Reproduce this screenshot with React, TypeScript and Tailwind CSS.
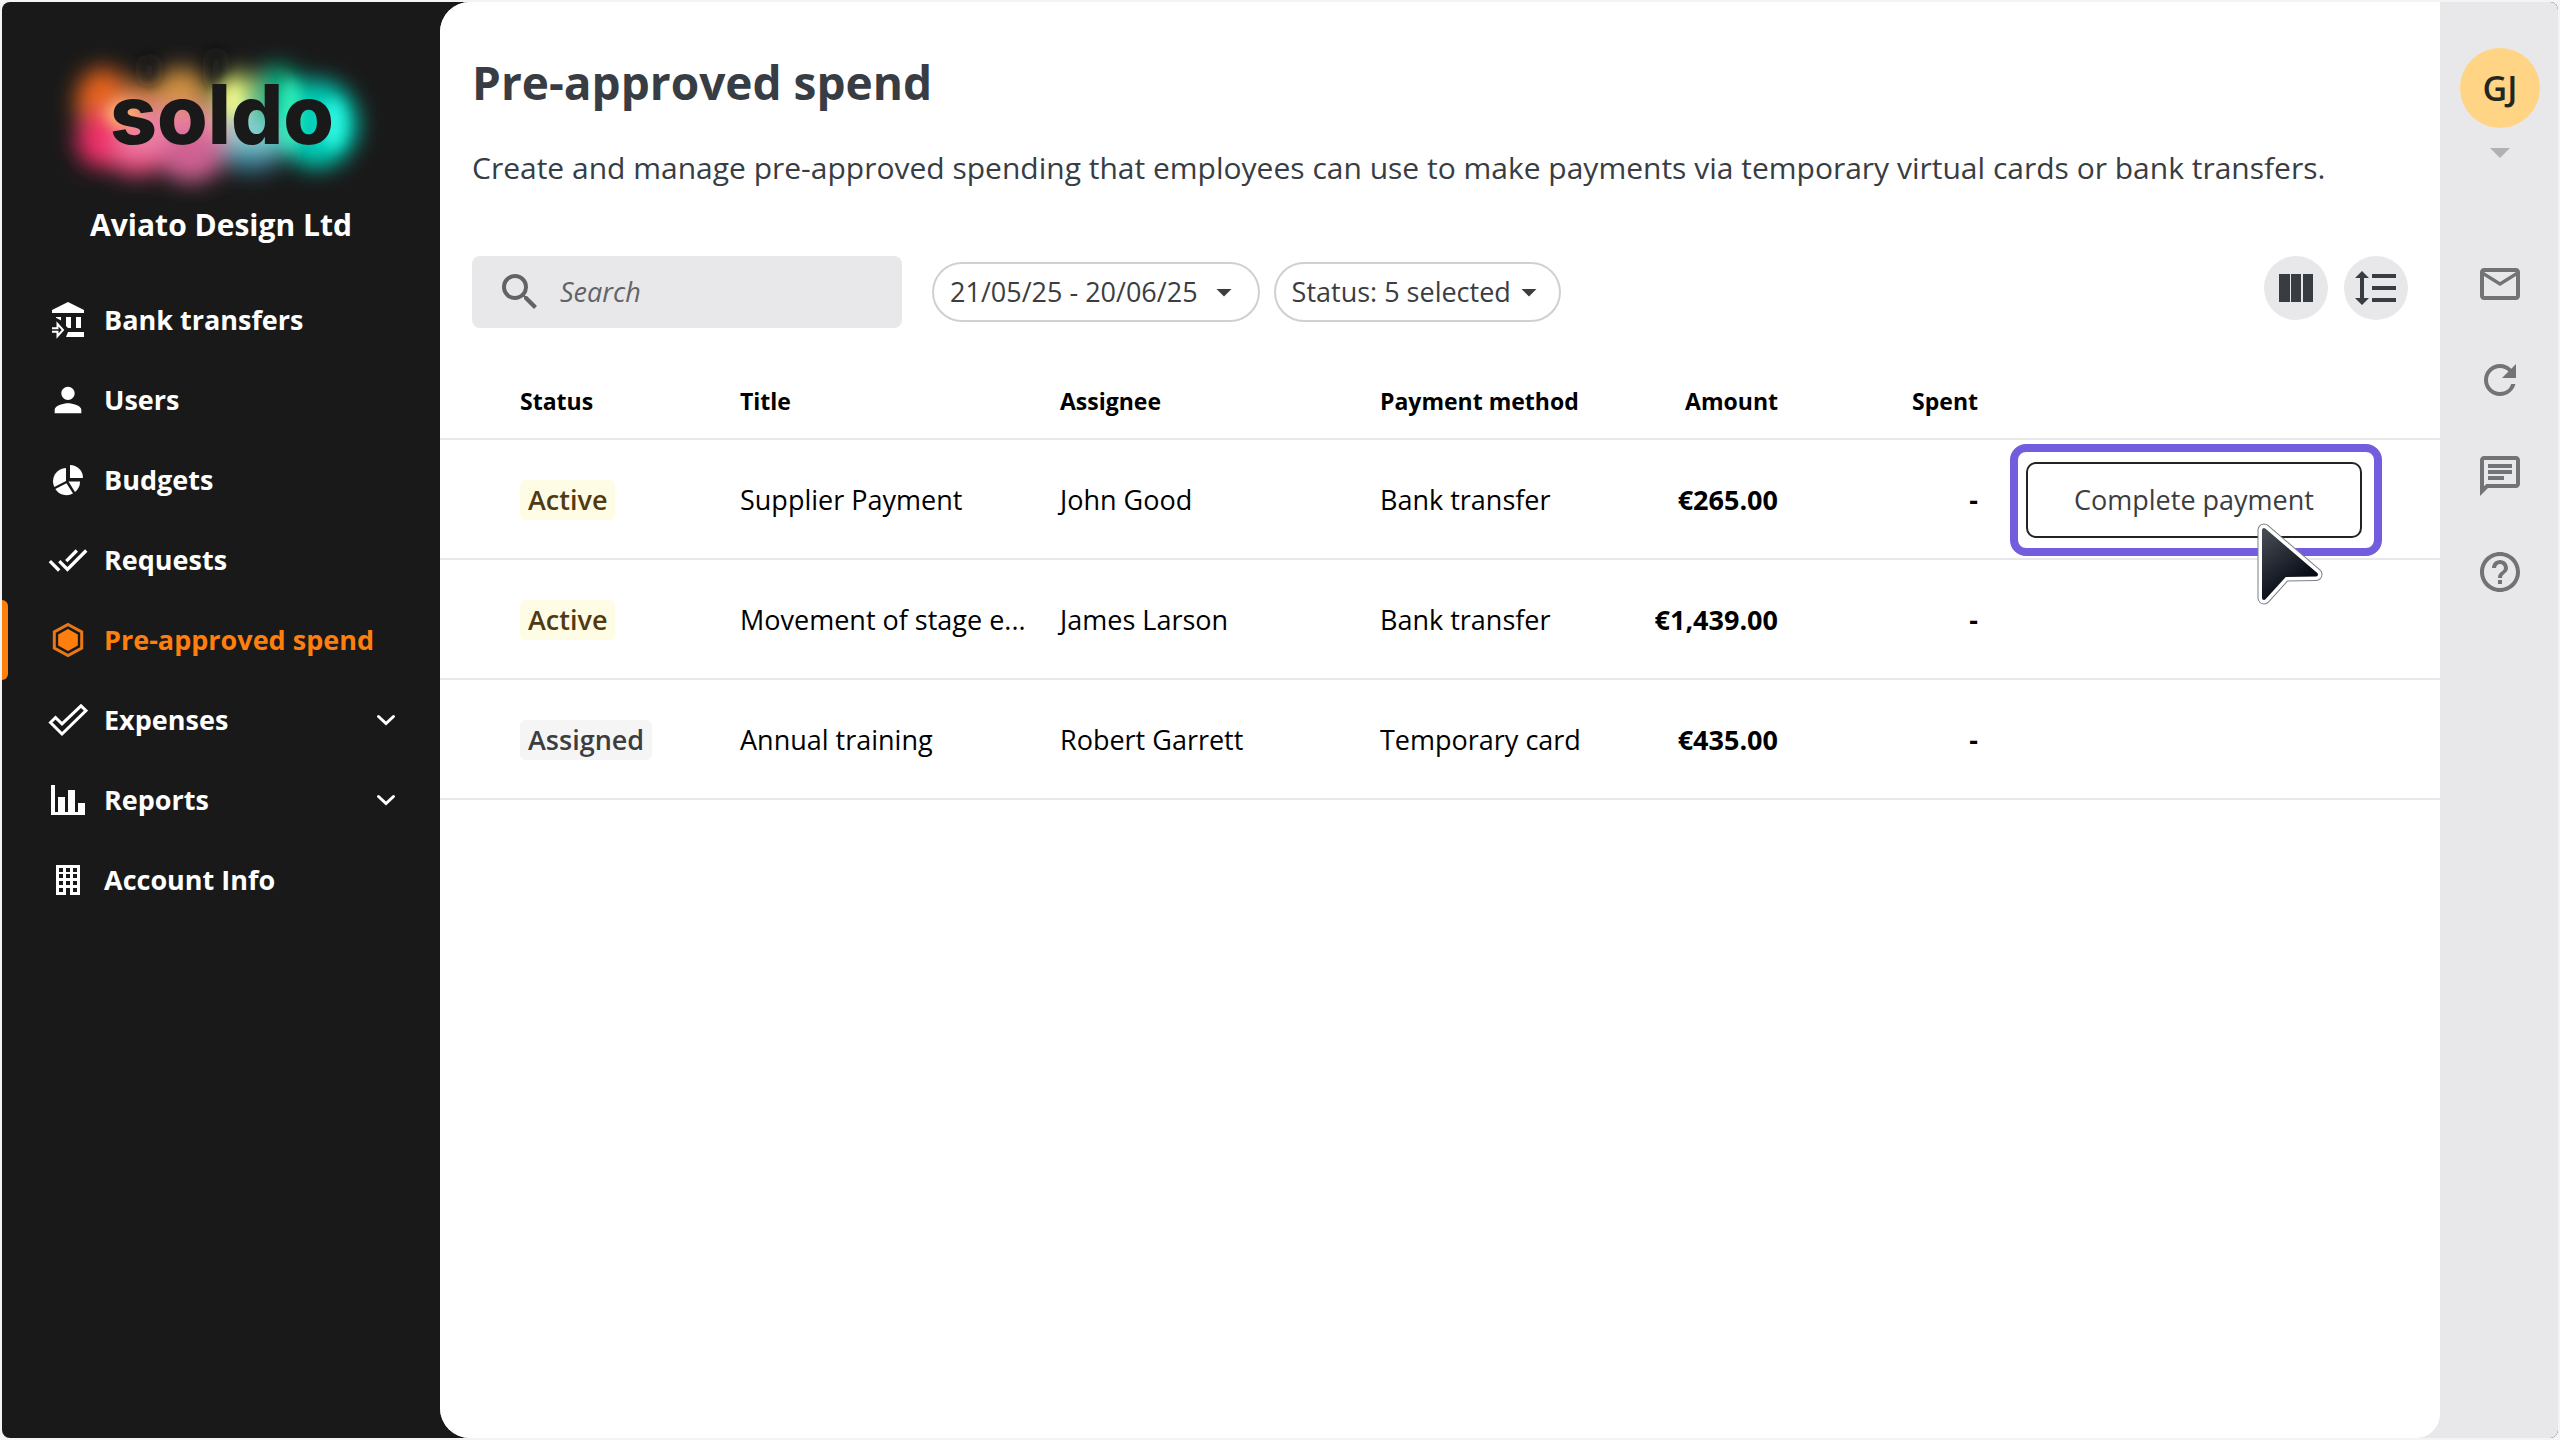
import type { ReactNode } from "react";
import clsx from "clsx";
import {
  MdArrowDropDown,
  MdDoneAll,
  MdFormatLineSpacing,
  MdHelpOutline,
  MdMailOutline,
  MdOutlineChat,
  MdPerson,
  MdRefresh,
  MdSearch,
} from "react-icons/md";

type NavItem = {
  label: string;
  icon: ReactNode;
  active?: boolean;
  expandable?: boolean;
};

type Spend = {
  status: "Active" | "Assigned";
  title: string;
  assignee: string;
  method: string;
  amount: string;
  spent: string;
  action?: string;
};

const BankIcon = () => (
  <svg width="40" height="40" viewBox="0 0 40 40" fill="currentColor">
    <path d="M20 2 36 10v3H4v-3z" />
    <path d="M8 17h5v3.500L8 17.800zM18 17h5v11h-3l-2-2zM28 17h5v11h-5zM20 32h16v5H18z" />
    <path d="M4 28.200h5.500v-4.400l5.500 6.200-5.500 6.200v-4.400H4" fill="none" stroke="currentColor" strokeWidth="2" />
  </svg>
);

const PieIcon = () => (
  <svg width="40" height="40" viewBox="0 0 40 40" fill="currentColor">
    <path d="M22 5a13 13 0 0 1 13 13H22z" />
    <path d="M18 8v13L6.300 27A13.300 13.300 0 0 1 18 8z" />
    <path d="M7.300 29 18.500 23.200 25 33.400A13.300 13.300 0 0 1 7.300 29z" />
    <path d="M20.500 21.500H32A13.300 13.300 0 0 1 27 32z" />
  </svg>
);

const HexagonIcon = () => (
  <svg width="40" height="40" viewBox="0 0 40 40">
    <path d="M20 4.500 33.700 12v16L20 35.500 6.300 28V12z" fill="none" stroke="#e8771a" strokeWidth="3" />
    <path d="M20 9 29.800 14.500v11L20 31l-9.800-5.500v-11z" fill="#ff7f0e" />
  </svg>
);

const CheckOutlineIcon = () => (
  <svg width="40" height="40" viewBox="0 0 40 40" fill="none" stroke="currentColor" strokeWidth="3">
    <path d="m2.500 22.500 5-5 6.500 6.300L33 5.800l5 4.800L14 34z" />
  </svg>
);

const ChartIcon = () => (
  <svg width="40" height="40" viewBox="0 0 40 40" fill="currentColor">
    <path d="M3 5h4v27h3V17h7v15h3V10h7v22h3v-9h7v12H3z" />
  </svg>
);

const BuildingIcon = () => (
  <svg width="40" height="40" viewBox="0 0 40 40">
    <path d="M8 5h24v30H22v-5h-4v5H8z" fill="currentColor" />
    {[8, 14, 21, 28].map((y) =>
      [11, 18, 25].map((x) => <rect key={`${x}-${y}`} x={x} y={y} width="4" height="4" fill="#191919" />)
    )}
  </svg>
);

const ColumnsIcon = () => (
  <svg width="48" height="48" viewBox="0 0 48 48" fill="currentColor">
    <path d="M7 10h11v28H7zM19 10h10v28H19zM31 10h10v28H31z" />
  </svg>
);

const Chevron = () => (
  <svg width="20" height="12" viewBox="0 0 20 12" fill="none" stroke="currentColor" strokeWidth="3" strokeLinecap="round">
    <path d="m2.500 2.500 7.500 7 7.500-7" />
  </svg>
);

const Pointer = () => (
  <svg className="absolute top-[69px] left-[236px]" width="72" height="86" viewBox="0 0 72 86">
    <defs>
      <linearGradient id="pointer" x1="0" y1="0" x2="0.5" y2="0.9">
        <stop offset="0" stopColor="#474c55" />
        <stop offset="1" stopColor="#060a14" />
      </linearGradient>
    </defs>
    <g strokeLinejoin="round">
      <path d="M10 9v68l21-23 31-.5z" fill="#7d7f85" stroke="#7d7f85" strokeWidth="13" />
      <path d="M10 9v68l21-23 31-.5z" fill="#fff" stroke="#fff" strokeWidth="11" />
      <path d="M10 9v68l21-23 31-.5z" fill="url(#pointer)" stroke="url(#pointer)" strokeWidth="4" />
    </g>
  </svg>
);

const Logo = () => (
  <svg width="360" height="160" viewBox="0 0 360 160" role="img" aria-label="soldo">
    <defs>
      <filter id="glow" x="-20%" y="-40%" width="140%" height="180%">
        <feGaussianBlur stdDeviation="11" />
      </filter>
      <filter id="soft" x="-40%" y="-40%" width="180%" height="180%">
        <feGaussianBlur stdDeviation="7" />
      </filter>
    </defs>
    <g filter="url(#glow)">
      <ellipse cx="62" cy="60" rx="27" ry="34" fill="#e8641c" />
      <ellipse cx="100" cy="64" rx="26" ry="26" fill="#c97a3e" />
      <ellipse cx="62" cy="98" rx="27" ry="28" fill="#ee2f66" />
      <ellipse cx="96" cy="108" rx="30" ry="26" fill="#ea4a7e" />
      <ellipse cx="140" cy="54" rx="27" ry="28" fill="#d2933f" />
      <rect x="80" y="68" width="120" height="44" fill="#ee7fa6" />
      <ellipse cx="150" cy="114" rx="32" ry="26" fill="#cf6093" />
      <ellipse cx="194" cy="58" rx="22" ry="28" fill="#cfe26a" />
      <ellipse cx="210" cy="110" rx="32" ry="20" fill="#3b7f96" />
      <rect x="188" y="64" width="56" height="42" fill="#86d2d6" />
      <ellipse cx="236" cy="54" rx="28" ry="30" fill="#0fae7d" />
      <ellipse cx="276" cy="82" rx="41" ry="44" fill="#06cdb6" />
    </g>
    <g filter="url(#soft)">
      <ellipse cx="82" cy="72" rx="18" ry="14" fill="#ffab6b" />
      <ellipse cx="192" cy="60" rx="9" ry="16" fill="#f3f98e" />
      <ellipse cx="250" cy="72" rx="9" ry="34" fill="#39f2b8" />
      <ellipse cx="292" cy="82" rx="12" ry="24" fill="#2ff5e0" />
      <ellipse cx="108" cy="28" rx="9" ry="16" fill="#191919" fillOpacity="0.7" />
      <ellipse cx="175" cy="26" rx="9" ry="20" fill="#191919" fillOpacity="0.8" />
    </g>
    <text x="181" y="102" textAnchor="middle" fontFamily="Inter, sans-serif" fontWeight="800" fontSize="82" fill="#191919">
      soldo
    </text>
  </svg>
);

const navItems: NavItem[] = [
  { label: "Bank transfers", icon: <BankIcon /> },
  { label: "Users", icon: <MdPerson size={40} /> },
  { label: "Budgets", icon: <PieIcon /> },
  { label: "Requests", icon: <MdDoneAll size={40} /> },
  { label: "Pre-approved spend", icon: <HexagonIcon />, active: true },
  { label: "Expenses", icon: <CheckOutlineIcon />, expandable: true },
  { label: "Reports", icon: <ChartIcon />, expandable: true },
  { label: "Account Info", icon: <BuildingIcon /> },
];

const spends: Spend[] = [
  {
    status: "Active",
    title: "Supplier Payment",
    assignee: "John Good",
    method: "Bank transfer",
    amount: "€265.00",
    spent: "-",
    action: "Complete payment",
  },
  {
    status: "Active",
    title: "Movement of stage e...",
    assignee: "James Larson",
    method: "Bank transfer",
    amount: "€1,439.00",
    spent: "-",
  },
  {
    status: "Assigned",
    title: "Annual training",
    assignee: "Robert Garrett",
    method: "Temporary card",
    amount: "€435.00",
    spent: "-",
  },
];

const tools = [
  { label: "Messages", Icon: MdMailOutline },
  { label: "Refresh", Icon: MdRefresh },
  { label: "Chat", Icon: MdOutlineChat },
  { label: "Help", Icon: MdHelpOutline },
];

function Sidebar() {
  return (
    <aside className="flex w-[438px] shrink-0 flex-col text-white">
      <div className="flex flex-col items-center pt-10">
        <Logo />
        <p className="text-[30px] leading-[46px] font-bold">Aviato Design Ltd</p>
      </div>
      <nav className="mt-8">
        {navItems.map(({ label, icon, active, expandable }) => (
          <a
            key={label}
            href="#"
            className={clsx(
              "relative flex h-20 items-center gap-4 pr-[44px] pl-[46px] text-[27px] font-bold",
              active && "text-[#ff7f0e]"
            )}
          >
            {active && <span className="absolute inset-y-0 left-0 w-1.5 rounded-r-md bg-[#ff7f0e]" />}
            {icon}
            <span className="flex-1">{label}</span>
            {expandable && <Chevron />}
          </a>
        ))}
      </nav>
    </aside>
  );
}

function Toolbar() {
  return (
    <div className="flex items-center px-8">
      <label className="flex h-18 w-[430px] items-center gap-4 rounded-lg bg-[#e8e8ea] px-6 text-[#626366]">
        <MdSearch size={48} className="shrink-0" />
        <input
          type="search"
          aria-label="Search"
          placeholder="Search"
          className="w-full min-w-0 bg-transparent text-[27px] italic outline-none placeholder:text-[#626366]"
        />
      </label>
      <div className="ml-[30px] flex gap-3.5 text-[27px] text-[#3c3d40]">
        <button className="flex h-15 items-center gap-2 rounded-full border-2 border-[#d0d0d2] pr-4 pl-4">
          21/05/25 - 20/06/25
          <MdArrowDropDown size={36} />
        </button>
        <button className="flex h-15 items-center rounded-full border-2 border-[#d0d0d2] pr-3 pl-4">
          Status: 5 selected
          <MdArrowDropDown size={36} />
        </button>
      </div>
      <div className="ml-auto flex gap-4 self-start text-[#383d44]">
        <button aria-label="Columns" className="flex size-16 items-center justify-center rounded-full bg-[#e8e8ea]">
          <ColumnsIcon />
        </button>
        <button aria-label="Row height" className="flex size-16 items-center justify-center rounded-full bg-[#e8e8ea]">
          <MdFormatLineSpacing size={48} />
        </button>
      </div>
    </div>
  );
}

function SpendTable() {
  return (
    <table className="mt-[36px] w-full table-fixed text-left text-[27px] text-black">
      <colgroup>
        <col className="w-[300px]" />
        <col className="w-[320px]" />
        <col className="w-[320px]" />
        <col className="w-[220px]" />
        <col className="w-[178px]" />
        <col className="w-[200px]" />
        <col />
      </colgroup>
      <thead>
        <tr className="h-[75px] border-b-2 border-[#e8e8ea] text-[23px] whitespace-nowrap">
          <th className="pl-20">Status</th>
          <th>Title</th>
          <th>Assignee</th>
          <th>Payment method</th>
          <th className="text-right">Amount</th>
          <th className="text-right">Spent</th>
          <td />
        </tr>
      </thead>
      <tbody>
        {spends.map((row) => (
          <tr key={row.title} className="h-[120px] border-b-2 border-[#e8e8ea] *:pt-0.5">
            <td className="pl-20">
              <span
                className={clsx(
                  "inline-flex h-10 items-center rounded-md px-2 font-semibold",
                  row.status === "Active" ? "bg-[#fffce6] text-[#4f3a12]" : "bg-[#f5f5f6] text-[#3c3d40]"
                )}
              >
                {row.status}
              </span>
            </td>
            <td className="truncate">{row.title}</td>
            <td>{row.assignee}</td>
            <td>{row.method}</td>
            <td className="text-right font-bold">{row.amount}</td>
            <td className="text-right font-bold">{row.spent}</td>
            <td className="pl-8">
              {row.action && (
                <div className="relative w-[372px] rounded-2xl border-8 border-[#735cdd] py-2.5 pr-3 pl-2">
                  <button className="h-19 w-full rounded-[10px] border-2 border-[#232323] text-[#3c3d40]">
                    {row.action}
                  </button>
                  <Pointer />
                </div>
              )}
            </td>
          </tr>
        ))}
      </tbody>
    </table>
  );
}

export default function App() {
  return (
    <div className="flex min-h-screen bg-[#f4f4f5] p-0.5 font-['Open_Sans',sans-serif]">
      <div className="flex flex-1 overflow-hidden rounded-lg bg-[#191919]">
        <Sidebar />
        <div className="flex min-w-0 flex-1 rounded-l-[30px] bg-[#e8e8ea]">
          <main className="min-w-0 flex-1 rounded-l-[30px] rounded-br-[24px] bg-white pt-12">
            <h1 className="px-8 text-[46px] leading-16 font-bold text-[#383d44]">Pre-approved spend</h1>
            <p className="mt-[30px] mb-16 px-8 text-[30px] leading-12 text-[#383d44]">
              Create and manage pre-approved spending that employees can use to make payments via temporary virtual
              cards or bank transfers.
            </p>
            <Toolbar />
            <SpendTable />
          </main>
          <aside className="flex w-[118px] shrink-0 flex-col items-center pt-[46px] pl-0.5 text-[#717377]">
            <button aria-label="Account menu" className="flex flex-col items-center">
              <span className="flex size-20 items-center justify-center rounded-full bg-[#ffd585] text-[34px] font-semibold text-[#24271f]">
                GJ
              </span>
              <svg className="mt-5" width="20" height="10" viewBox="0 0 20 10" fill="#b0b1b3">
                <path d="M0 0h20L10 10z" />
              </svg>
            </button>
            <div className="mt-[102px] flex flex-col gap-12">
              {tools.map(({ label, Icon }) => (
                <button key={label} aria-label={label}>
                  <Icon size={48} />
                </button>
              ))}
            </div>
          </aside>
        </div>
      </div>
    </div>
  );
}
